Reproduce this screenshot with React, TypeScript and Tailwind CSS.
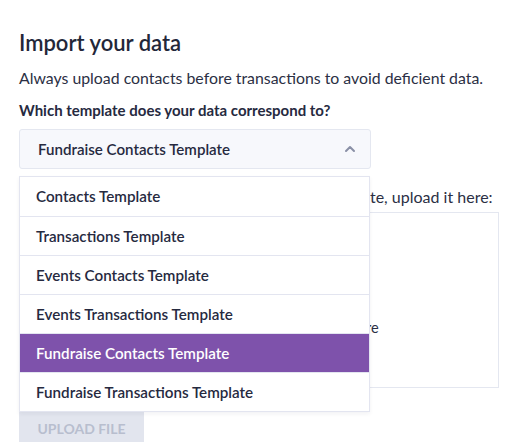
import React from 'react';

const templates = [
  'Contacts Template',
  'Transactions Template',
  'Events Contacts Template',
  'Events Transactions Template',
  'Fundraise Contacts Template',
  'Fundraise Transactions Template',
];

const selected = 'Fundraise Contacts Template';

export default function App() {
  return (
    <div className="min-h-[442px] bg-white pl-[19px] pt-[26px] text-[#262a3f]" style={{ fontFamily: 'Lato, "Open Sans", sans-serif' }}>
      <h1 className="text-[22px] font-semibold leading-[34px] text-[#232739]">Import your data</h1>
      <p className="mt-[7px] text-[15.85px] leading-[22px] text-[#2b2f44]">
        Always upload contacts before transactions to avoid deficient data.
      </p>
      <p className="mt-[11px] text-[15px] font-bold leading-[20px] text-[#262a3f]">
        Which template does your data correspond to?
      </p>

      {/* Select + open menu */}
      <div className="relative mt-[9px] w-[352px]">
        <button className="flex h-[40px] w-full items-center justify-between rounded-[3px] border border-[#e4e7f0] bg-[#f7f8fc] pl-[18px] pr-[14px] text-[15.1px] font-semibold text-[#262a3f]">
          <span>{selected}</span>
          <svg width="12" height="8" viewBox="0 0 12 8" fill="none">
            <path d="M2 6l4-4 4 4" stroke="#8a90a6" strokeWidth="2" strokeLinecap="round" strokeLinejoin="round" />
          </svg>
        </button>

        <ul className="absolute left-0 top-[47px] z-10 w-[351px] border border-[#e3e5f0] bg-white shadow-[0_2px_4px_rgba(30,35,60,0.06)]">
          {templates.map((t, i) => (
            <li
              key={t}
              className={`flex h-[39px] items-center pl-[16px] text-[15.2px] font-semibold ${
                i > 0 ? 'border-t border-[#e3e5f0]' : ''
              } ${t === selected ? 'bg-[#7e52ab] text-white' : 'text-[#262a3f]'}`}
            >
              {t}
            </li>
          ))}
        </ul>
      </div>

      <p className="mt-[17px] text-[16px] leading-[22px] text-[#2b2f44]">
        If you already have your data in the chosen template, upload it here:
      </p>

      <div className="mt-[4px] flex h-[176px] w-[480px] flex-col items-center justify-center border border-[#e4e7f0] pt-[56px]">
        <p className="text-[14.6px] text-[#2b2f44]">Drag and drop your template file here</p>
      </div>

      <button className="mt-[23px] h-[34px] w-[125px] bg-[#e2e5ee] text-[14px] font-bold text-[#b8bece]">
        UPLOAD FILE
      </button>
    </div>
  );
}
